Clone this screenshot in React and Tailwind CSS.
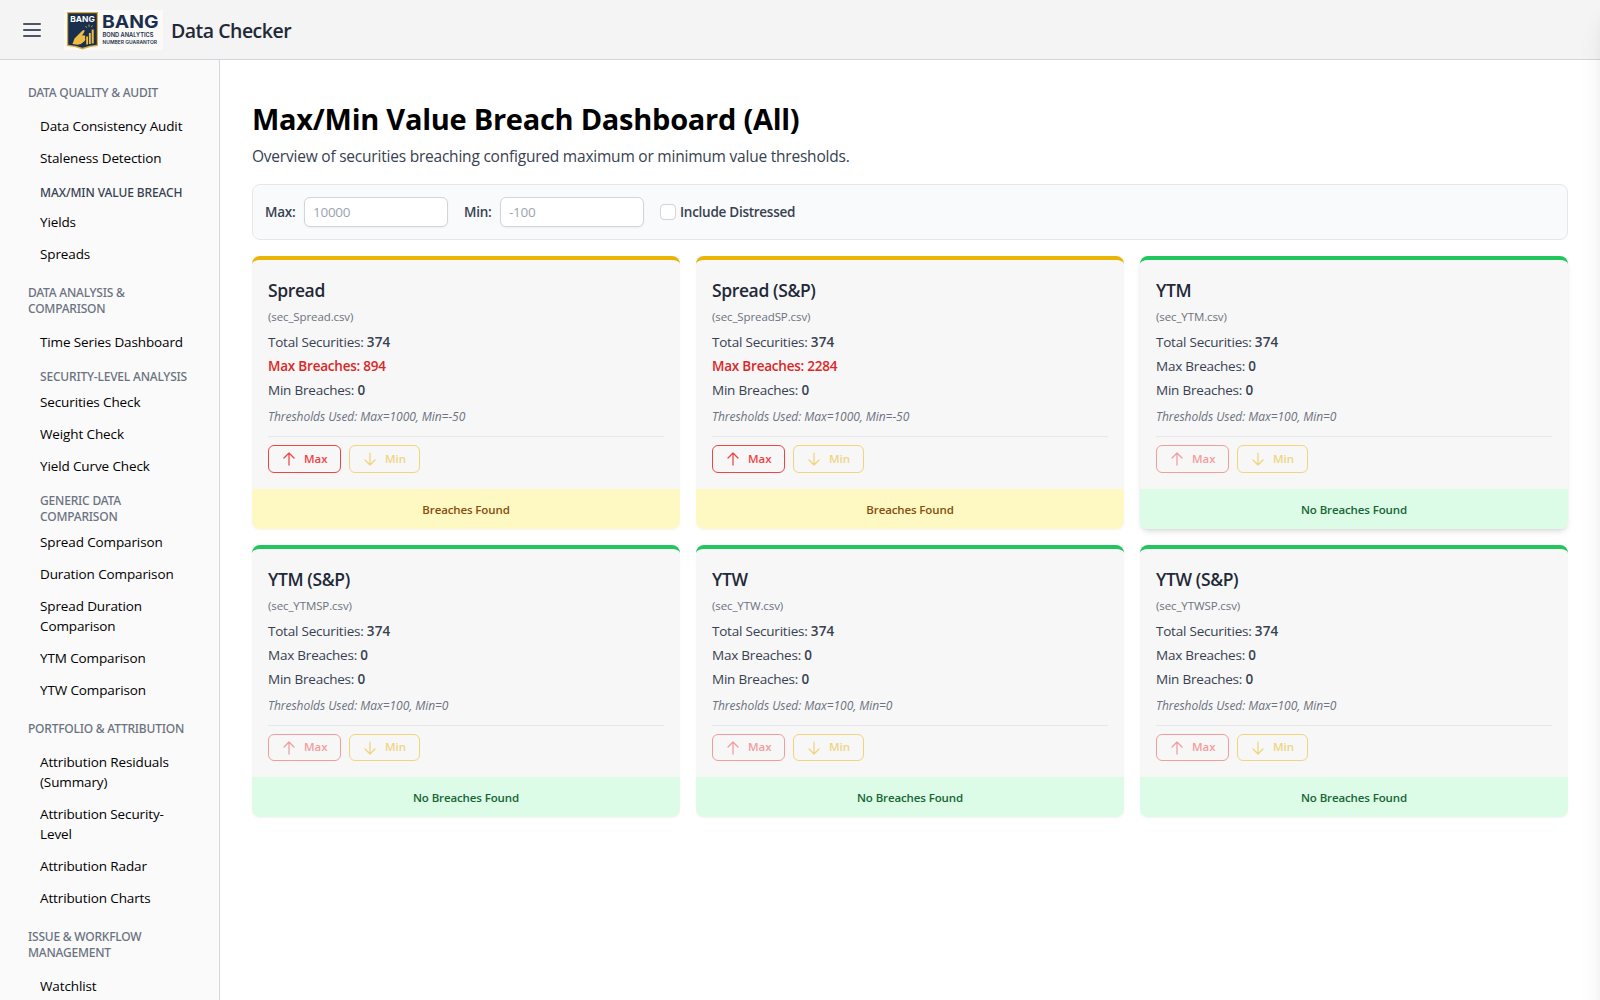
import React from "react";

const NAV = [
  { type: "section", label: "DATA QUALITY & AUDIT" },
  { type: "link", label: "Data Consistency Audit" },
  { type: "link", label: "Staleness Detection" },
  { type: "active", label: "MAX/MIN VALUE BREACH" },
  { type: "link", label: "Yields" },
  { type: "link", label: "Spreads" },
  { type: "section", label: "DATA ANALYSIS & COMPARISON" },
  { type: "link", label: "Time Series Dashboard" },
  { type: "sub", label: "SECURITY-LEVEL ANALYSIS" },
  { type: "link", label: "Securities Check" },
  { type: "link", label: "Weight Check" },
  { type: "link", label: "Yield Curve Check" },
  { type: "sub", label: "GENERIC DATA COMPARISON" },
  { type: "link", label: "Spread Comparison" },
  { type: "link", label: "Duration Comparison" },
  { type: "link", label: "Spread Duration Comparison" },
  { type: "link", label: "YTM Comparison" },
  { type: "link", label: "YTW Comparison" },
  { type: "section", label: "PORTFOLIO & ATTRIBUTION" },
  { type: "link", label: "Attribution Residuals (Summary)" },
  { type: "link", label: "Attribution Security-Level" },
  { type: "link", label: "Attribution Radar" },
  { type: "link", label: "Attribution Charts" },
  { type: "section", label: "ISSUE & WORKFLOW MANAGEMENT" },
  { type: "link", label: "Watchlist" },
];

const NAV_CLASS = {
  section:
    "mt-[15px] mb-[9px] first:mt-px w-[160px] font-['Noto_Sans',sans-serif] text-[12px] leading-4 font-medium tracking-[-0.018em] text-[#6b7280]",
  sub: "mt-[11px] mb-px ml-3 w-[152px] font-['Noto_Sans',sans-serif] text-[12px] leading-4 font-medium tracking-[-0.016em] text-[#6b7280]",
  active:
    "mt-[11px] mb-[5px] ml-3 w-[152px] font-['Noto_Sans',sans-serif] text-[12px] leading-4 font-medium tracking-[-0.009em] text-[#374151]",
  link: "ml-3 w-[148px] py-[6px] text-[13.5px] leading-5 tracking-[-0.009em] text-black",
};

const CARDS = [
  { name: "Spread", file: "sec_Spread.csv", max: 894, limits: "Max=1000, Min=-50" },
  { name: "Spread (S&P)", file: "sec_SpreadSP.csv", max: 2284, limits: "Max=1000, Min=-50" },
  { name: "YTM", file: "sec_YTM.csv", max: 0, limits: "Max=100, Min=0", raised: true },
  { name: "YTM (S&P)", file: "sec_YTMSP.csv", max: 0, limits: "Max=100, Min=0" },
  { name: "YTW", file: "sec_YTW.csv", max: 0, limits: "Max=100, Min=0" },
  { name: "YTW (S&P)", file: "sec_YTWSP.csv", max: 0, limits: "Max=100, Min=0" },
];

function Logo() {
  return (
    <svg className="h-10 w-[99px] shrink-0" viewBox="0 0 99 40">
      <rect width="99" height="40" fill="#fbfaf6" />
      <path d="M3 2h31v34q-8 .3-15.500 3.500q-7.500-3.200-15.500-3.500z" fill="#d9ab3a" />
      <path d="M4.200 3.200h28.600v31.600q-7 .4-14.300 3q-7.300-2.600-14.300-3z" fill="#1a2f4e" />
      <text x="6.300" y="12.400" textLength="24.500" lengthAdjust="spacingAndGlyphs" fontSize="8.200" fontWeight="700" fill="#fff" fontFamily="Inter, sans-serif">BANG</text>
      <path d="M8.500 34l2-5.500l7.500-7.500q2.200-1.800 2.600-.3q.2.900-2.600 4.600l2.800.2q1 1 .2 2.200l.4 2l-1.200 1.800l-3.400 2.500l-3.300.8z" fill="#edbc42" />
      <path d="M22.200 26.500h1.800v8h-1.800zM24.900 23h1.900v11h-1.900zM27.700 19.500h2v14h-2z" fill="#edbc42" />
      <path d="M21.500 16l1.300 1.700M25 14.500v2.300M28.500 15.500l-1.300 1.700" stroke="#edbc42" strokeWidth=".8" />
      <text x="38" y="18.200" textLength="56.500" lengthAdjust="spacingAndGlyphs" fontSize="17.800" fontWeight="700" fill="#1a2f4e" fontFamily="Inter, sans-serif">BANG</text>
      <text x="38.500" y="27.300" textLength="51" lengthAdjust="spacingAndGlyphs" fontSize="5.800" fontWeight="600" fill="#1a2f4e" fontFamily="Inter, sans-serif">BOND ANALYTICS</text>
      <text x="38.500" y="34" textLength="54.500" lengthAdjust="spacingAndGlyphs" fontSize="5.200" fontWeight="600" fill="#1a2f4e" fontFamily="Inter, sans-serif">NUMBER GUARANTOR</text>
    </svg>
  );
}

function Arrow({ down }) {
  return (
    <svg className="mt-px size-4" viewBox="0 0 16 16" fill="none" stroke="currentColor" strokeWidth="1.250" strokeLinecap="round" strokeLinejoin="round">
      <path d={down ? "M3 9l5 5 5-5M8 14V2" : "M3 7l5-5 5 5M8 2v12"} />
    </svg>
  );
}

function Card({ name, file, max, limits, raised }) {
  const breached = max > 0;
  return (
    <div
      className={`flex flex-col overflow-hidden rounded-lg border-t-4 bg-[#f7f7f7] ${breached ? "border-[#eab308]" : "border-[#22c55e]"} ${raised ? "shadow-md" : "shadow-[0_1px_2px_0_rgb(0_0_0/0.05)]"}`}
    >
      <div className="p-4">
        <h2 className="text-[17.500px] leading-7 font-semibold tracking-[-0.022em] text-[#1f2937]">{name}</h2>
        <p className="mt-[5px] text-[11.500px] leading-4 tracking-[-0.009em] text-[#6b7280]">({file})</p>
        <div className="mt-[7px] flex flex-col gap-1 text-[13.500px] leading-5 tracking-[-0.016em] text-[#374151]">
          <p>
            Total Securities: <span className="font-semibold tracking-[0.01em]">374</span>
          </p>
          <p className={breached ? "font-semibold text-[#dc2626]" : ""}>
            Max Breaches: <span className="font-semibold">{max}</span>
          </p>
          <p>
            Min Breaches: <span className="font-semibold">0</span>
          </p>
        </div>
        <p className="mt-[9px] text-[12px] leading-4 tracking-[-0.004em] text-[#6b7280] italic">Thresholds Used: {limits}</p>
        <div className="mt-[11px] flex gap-2 border-t border-[#e5e7eb] pt-2 text-[11.500px] leading-4 font-semibold">
          <button className={`flex h-[27.500px] w-[73px] items-center rounded-md border border-[#ef4444] pl-3 text-[#ef4444] ${breached ? "" : "opacity-50"}`}>
            <Arrow />
            <span className="ml-[7px]">Max</span>
          </button>
          <button className="flex h-[27.500px] w-[71px] items-center rounded-md border border-[#eab308] pl-3 text-[#eab308] opacity-50">
            <Arrow down />
            <span className="ml-[7px]">Min</span>
          </button>
        </div>
      </div>
      <div
        className={`px-3 pt-[13px] pb-[11px] text-center text-[11.500px] leading-4 font-semibold tracking-[-0.010em] ${breached ? "bg-[#fef9c3] text-[#854d0e]" : "bg-[#dcfce7] text-[#166534]"}`}
      >
        {breached ? "Breaches Found" : "No Breaches Found"}
      </div>
    </div>
  );
}

export default function App() {
  return (
    <div className="relative flex h-screen flex-col overflow-hidden bg-white font-['Open_Sans',sans-serif]">
      <header className="flex h-[60px] shrink-0 items-center border-b border-gray-300 bg-[#f4f4f4] pl-5">
        <svg className="size-6 text-[#4b5563]" viewBox="0 0 24 24" fill="none" stroke="currentColor" strokeWidth="2" strokeLinecap="round">
          <path d="M4 6h16M4 12h16M4 18h16" />
        </svg>
        <div className="ml-5">
          <Logo />
        </div>
        <span className="mt-0.5 ml-2 text-[19.500px] leading-7 font-semibold tracking-[-0.026em] text-[#1f2937]">Data Checker</span>
      </header>
      <div className="flex min-h-0 grow">
        <nav className="w-[220px] shrink-0 overflow-hidden border-r border-gray-300 bg-[#fafafa] pt-6 pl-7">
          {NAV.map((n) => (
            <div key={n.label} className={NAV_CLASS[n.type]}>
              {n.label}
            </div>
          ))}
        </nav>
        <main className="min-w-0 grow px-8 pt-10">
          <h1 className="text-[29px] leading-[38px] font-bold tracking-[-0.009em] text-black">Max/Min Value Breach Dashboard (All)</h1>
          <p className="mt-[6px] text-[15.500px] leading-6 tracking-[-0.014em] text-[#374151]">
            Overview of securities breaching configured maximum or minimum value thresholds.
          </p>
          <div className="mt-4 flex h-14 items-center rounded-lg border border-[#e5e7eb] bg-[#f9fafb] px-3 text-[13.500px] leading-5 tracking-[-0.020em] text-[#374151]">
            <label className="w-[39px] font-semibold">Max:</label>
            <input className="h-[30px] w-36 rounded-md border border-gray-300 bg-white px-2 shadow-xs placeholder:text-[#9ca3af]" placeholder="10000" />
            <label className="ml-4 w-9 font-semibold">Min:</label>
            <input className="h-[30px] w-36 rounded-md border border-gray-300 bg-white px-2 shadow-xs placeholder:text-[#9ca3af]" placeholder="-100" />
            <span className="ml-4 size-4 rounded border border-gray-300 bg-white" />
            <label className="ml-1 font-semibold">Include Distressed</label>
          </div>
          <div className="mt-4 grid grid-cols-3 gap-4">
            {CARDS.map((c) => (
              <Card key={c.name} {...c} />
            ))}
          </div>
        </main>
      </div>
      <aside className="absolute inset-y-0 left-full w-96 bg-white shadow-xl" />
    </div>
  );
}
